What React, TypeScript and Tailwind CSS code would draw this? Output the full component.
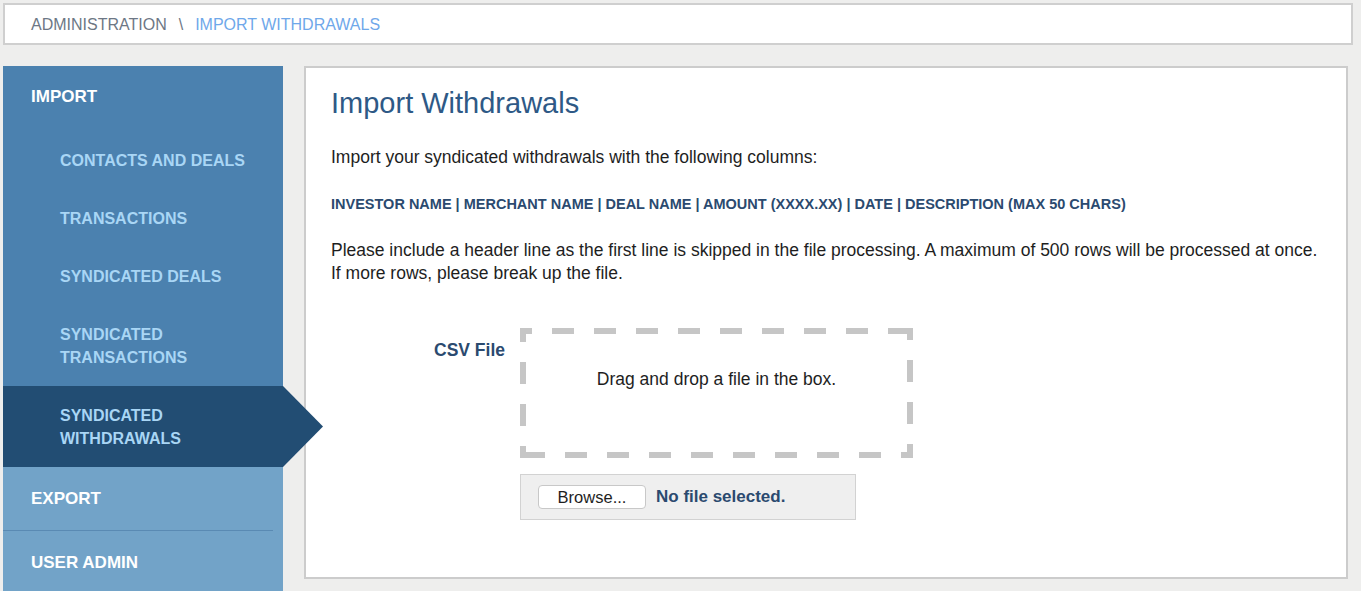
import React from "react";

const subItems = [
  { label: ["CONTACTS AND DEALS"] },
  { label: ["TRANSACTIONS"] },
  { label: ["SYNDICATED DEALS"] },
  { label: ["SYNDICATED", "TRANSACTIONS"] },
  { label: ["SYNDICATED", "WITHDRAWALS"], active: true },
];

function Sidebar() {
  return (
    <div className="w-[280px] ml-[3px] shrink-0 flex flex-col">
      <div className="bg-[#4b81af]">
        <div className="pl-[28px] pt-[21px] pb-[24px] text-[17px] leading-[20px] font-bold text-white">IMPORT</div>
        <ul>
          {subItems.map((item) => (
            <li
              key={item.label.join(" ")}
              className={
                "relative pl-[57px] py-[17.5px] text-[16px] leading-[23px] font-bold text-[#a9d6f5] " +
                (item.active ? "bg-[#224d73]" : "")
              }
            >
              {item.label.map((l) => (
                <div key={l}>{l}</div>
              ))}
              {item.active && (
                <span className="absolute left-full top-0 h-full w-[40px] bg-[#224d73] [clip-path:polygon(0_0,100%_50%,0_100%)]" />
              )}
            </li>
          ))}
        </ul>
      </div>
      <div className="bg-[#72a3c8] flex-1">
        <div className="mr-[10px] border-b border-[#5a8ab3] pl-[28px] pt-[22px] pb-[21px] text-[17px] leading-[20px] font-bold text-white">
          EXPORT
        </div>
        <div className="pl-[28px] pt-[22px] pb-[22px] text-[17px] leading-[20px] font-bold text-white">USER ADMIN</div>
      </div>
    </div>
  );
}

function DashedFrame() {
  // long grey dashes like the drop zone in the screenshot
  const w = 393;
  const h = 130;
  const s = 3;
  const dash = { stroke: "#c6c6c6", strokeWidth: 6, strokeDasharray: "22 20", strokeDashoffset: 10 };
  return (
    <svg className="absolute inset-0" width={w} height={h} viewBox={`0 0 ${w} ${h}`}>
      <line x1={0} y1={s} x2={w} y2={s} {...dash} />
      <line x1={w} y1={h - s} x2={0} y2={h - s} {...dash} />
      <line x1={s} y1={h} x2={s} y2={0} {...dash} />
      <line x1={w - s} y1={0} x2={w - s} y2={h} {...dash} />
    </svg>
  );
}

function Content() {
  return (
    <div className="ml-[21px] w-[1044px] h-[513px] bg-white border-2 border-[#cccccc] pl-[25px] pr-[20px] pt-[17px]">
      <h1 className="text-[29px] leading-[36px] text-[#2e5986]">Import Withdrawals</h1>
      <p className="mt-[25px] text-[17.5px] leading-[22px] text-[#1e1e1e]">
        Import your syndicated withdrawals with the following columns:
      </p>
      <p className="mt-[26px] text-[14.5px] leading-[20px] font-bold text-[#2b4a6f]">
        INVESTOR NAME | MERCHANT NAME | DEAL NAME | AMOUNT (XXXX.XX) | DATE | DESCRIPTION (MAX 50 CHARS)
      </p>
      <p className="mt-[25px] text-[17.5px] leading-[22.5px] text-[#1e1e1e]">
        Please include a header line as the first line is skipped in the file processing. A maximum of 500 rows will be processed at once.
        <br />
        If more rows, please break up the file.
      </p>
      <div className="mt-[44px] flex">
        <div className="w-[189px] pr-[15px] pt-[11px] text-right text-[17.5px] leading-[22px] font-bold text-[#2b4a6f]">CSV File</div>
        <div className="flex flex-col">
          <div className="relative w-[393px] h-[130px] flex justify-center pt-[40px]">
            <DashedFrame />
            <span className="text-[17.5px] leading-[22px] text-[#1e1e1e]">Drag and drop a file in the box.</span>
          </div>
          <div className="mt-[16px] w-[336px] h-[46px] bg-[#efefef] border border-[#d2d2d2] flex items-center pl-[17px] gap-[10px]">
            <button className="h-[24px] w-[108px] bg-white border border-[#c8c8c8] rounded-[4px] text-[16.5px] leading-[20px] text-[#1e1e1e]">
              Browse...
            </button>
            <span className="text-[17px] font-bold text-[#2b4a6f]">No file selected.</span>
          </div>
        </div>
      </div>
    </div>
  );
}

export default function App() {
  return (
    <div className="w-full h-[591px] overflow-hidden bg-[#eeeeed] font-['Liberation_Sans',Arial,sans-serif] flex flex-col">
      <div className="mt-[3px] ml-[3px] mr-[8px] h-[42px] shrink-0 bg-white border-2 border-[#cfcfcf] flex items-center pl-[26px] pt-[1px] text-[16px]">
        <span className="text-[#6d7785]">ADMINISTRATION</span>
        <span className="mx-[12px] text-[#6d7785]">\</span>
        <span className="text-[#6fa8ea]">IMPORT WITHDRAWALS</span>
      </div>
      <div className="mt-[21px] flex flex-1">
        <Sidebar />
        <Content />
      </div>
    </div>
  );
}
